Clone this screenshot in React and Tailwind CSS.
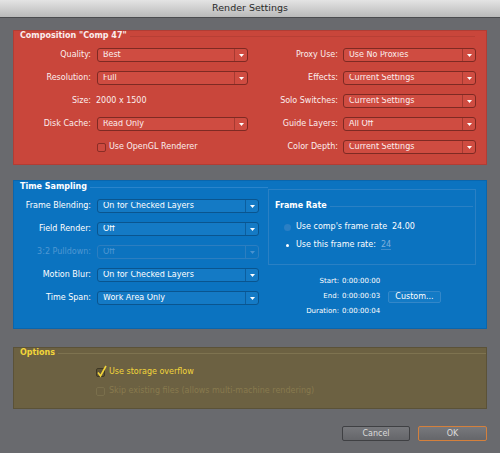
import React from 'react';

const SELECT_TONES = {
  red: 'border-[#7e2a23] bg-[#cf4c41] text-[#fbeeee]',
  blue: 'border-[#0a558f] bg-[#147ac5] text-white',
  off: 'border-[#2c7ec0] bg-[#0c73bf] text-[#4f97d2]',
};
const SEP_TONES = {
  red: 'border-[#a63a31]',
  blue: 'border-[#0c5e9e]',
  off: 'border-[#2c7ec0]',
};

function Select({ value, className = '', tone = 'red' }) {
  return (
    <div className={`flex h-[14px] items-center rounded-[3px] border ${SELECT_TONES[tone]} ${className}`}>
      <span className="flex-1 truncate pl-[5px] leading-none">{value}</span>
      <span className={`flex h-full w-[13px] items-center justify-center border-l ${SEP_TONES[tone]}`}>
        <svg width="5" height="3" viewBox="0 0 5 3">
          <path d="M0 0h5L2.5 3z" fill={tone === 'off' ? '#4a92cf' : '#ffffff'} />
        </svg>
      </span>
    </div>
  );
}

function GroupTitle({ children, color, line, className = '' }) {
  return (
    <div className={`flex h-[10px] items-center pl-[6px] ${className}`}>
      <span className={`font-bold leading-none ${color}`}>{children}</span>
      <span className={`ml-[3px] h-px flex-1 ${line}`} />
    </div>
  );
}

function RedRow({ left, right }) {
  return (
    <div className="flex h-[14px] items-center">
      {left}
      <div className="w-[90px] text-right leading-none">{right.label}</div>
      <Select className="ml-[5px] w-[133px]" value={right.value} />
    </div>
  );
}

function BlueRow({ label, value, tone = 'blue' }) {
  return (
    <div className="flex h-[14px] items-center">
      <div className={`w-[77px] text-right leading-none ${tone === 'off' ? 'text-[#4f97d2]' : ''}`}>{label}</div>
      <Select className="ml-[6px] w-[162px]" value={value} tone={tone} />
    </div>
  );
}

export default function App() {
  const leftLabel = (t) => <div className="w-[77px] text-right leading-none">{t}</div>;

  return (
    <div className="min-h-[453px] w-[500px] bg-[#696a6e] font-['DejaVu_Sans',sans-serif] text-[8px] text-white">
      {/* Title bar */}
      <div className="flex h-[18px] items-center justify-center border-b border-[#4a4b4e] bg-gradient-to-b from-[#e4e4e4] to-[#b9b9b9] text-[9.5px] text-[#2a2a2a]">
        Render Settings
      </div>

      <div className="px-[13px]">
        {/* Composition */}
        <div className="mt-[12px] border border-[#b13d34] bg-[#c9463b] pb-[10px] text-[#fbeeee]">
          <GroupTitle color="text-[#fbeeee]" line="bg-[#b83f35] mr-[11px]">Composition "Comp 47"</GroupTitle>
          <div className="mt-[7px] flex flex-col gap-[9px]">
            <RedRow
              left={<>{leftLabel('Quality:')}<Select className="ml-[6px] w-[151px]" value="Best" /></>}
              right={{ label: 'Proxy Use:', value: 'Use No Proxies' }}
            />
            <RedRow
              left={<>{leftLabel('Resolution:')}<Select className="ml-[6px] w-[151px]" value="Full" /></>}
              right={{ label: 'Effects:', value: 'Current Settings' }}
            />
            <RedRow
              left={<>{leftLabel('Size:')}<div className="ml-[5px] w-[152px] leading-none">2000 x 1500</div></>}
              right={{ label: 'Solo Switches:', value: 'Current Settings' }}
            />
            <RedRow
              left={<>{leftLabel('Disk Cache:')}<Select className="ml-[6px] w-[151px]" value="Read Only" /></>}
              right={{ label: 'Guide Layers:', value: 'All Off' }}
            />
            <RedRow
              left={
                <>
                  <div className="w-[77px]" />
                  <div className="ml-[6px] flex w-[151px] items-center">
                    <span className="h-[9px] w-[9px] rounded-[2px] border border-[#8a2d26] bg-[#cd4a40]" />
                    <span className="ml-[3px] leading-none">Use OpenGL Renderer</span>
                  </div>
                </>
              }
              right={{ label: 'Color Depth:', value: 'Current Settings' }}
            />
          </div>
        </div>

        {/* Time Sampling */}
        <div className="mt-[15px] flex items-start border border-[#0a66ad] bg-[#0b73c0] pb-[9px] pt-[1px]">
          <div className="w-[254px]">
            <GroupTitle color="text-white" line="bg-[#2a84cb]">Time Sampling</GroupTitle>
            <div className="mt-[7px] flex flex-col gap-[9px]">
              <BlueRow label="Frame Blending:" value="On for Checked Layers" />
              <BlueRow label="Field Render:" value="Off" />
              <BlueRow label="3:2 Pulldown:" value="Off" tone="off" />
              <BlueRow label="Motion Blur:" value="On for Checked Layers" />
              <BlueRow label="Time Span:" value="Work Area Only" />
            </div>
          </div>

          <div className="w-[208px] pt-[7px]">
            <div className="h-[76px] border border-[#2a80c4] pt-[11px]">
              <div className="flex h-[10px] items-center pl-[6px]">
                <span className="font-bold leading-none">Frame Rate</span>
                <span className="ml-[3px] mr-[2px] h-px flex-1 bg-[#2a80c4]" />
              </div>
              <div className="mt-[10px] flex h-[12px] items-center pl-[15px]">
                <span className="h-[7px] w-[7px] rounded-full bg-[#2b7fc4]" />
                <span className="ml-[5px] w-[96px] leading-none">Use comp's frame rate</span>
                <span className="leading-none">24.00</span>
              </div>
              <div className="mt-[6px] flex h-[12px] items-center pl-[15px]">
                <span className="flex h-[7px] w-[7px] items-center justify-center rounded-full">
                  <span className="h-[3px] w-[3px] rounded-full bg-white" />
                </span>
                <span className="ml-[5px] w-[85px] leading-none">Use this frame rate:</span>
                <span className="border-b border-[#3f8dcc] leading-none text-[#7fb0dc]">24</span>
              </div>
            </div>

            <div className="mt-[9px] text-[7px]">
              <div className="flex h-[15px] items-center">
                <span className="w-[71px] text-right leading-none">Start:</span>
                <span className="ml-[3px] leading-none">0:00:00:00</span>
              </div>
              <div className="flex h-[15px] items-center">
                <span className="w-[71px] text-right leading-none">End:</span>
                <span className="ml-[3px] w-[46px] leading-none">0:00:00:03</span>
                <span className="flex h-[12px] w-[53px] items-center justify-center rounded-[2px] border border-[#3387c9] bg-[#137ac5] text-[8px] leading-none">
                  Custom...
                </span>
              </div>
              <div className="flex h-[15px] items-center">
                <span className="w-[71px] text-right leading-none">Duration:</span>
                <span className="ml-[3px] leading-none">0:00:00:04</span>
              </div>
            </div>
          </div>
        </div>

        {/* Options */}
        <div className="mt-[18px] border border-[#5b5238] bg-[#6c6142] pb-[11px]">
          <GroupTitle color="text-[#f2d53a]" line="bg-[#7e7350]">Options</GroupTitle>
          <div className="mt-[8px] flex h-[12px] items-center pl-[82px]">
            <span className="relative h-[9px] w-[9px] rounded-[2px] border border-[#3e3825] bg-[#5e5437]">
              <svg className="absolute -left-[1px] -top-[4px]" width="12" height="13" viewBox="0 0 12 13">
                <path d="M2 7.5 L4.5 11 L10 1" stroke="#f2d53a" strokeWidth="1.6" fill="none" />
              </svg>
            </span>
            <span className="ml-[4px] leading-none text-[#f2d53a]">Use storage overflow</span>
          </div>
          <div className="mt-[7px] flex h-[12px] items-center pl-[82px]">
            <span className="h-[9px] w-[9px] rounded-[2px] border border-[#7a6f4c] bg-[#6c6142]" />
            <span className="ml-[4px] leading-none text-[#887a4e]">Skip existing files (allows multi-machine rendering)</span>
          </div>
        </div>

        {/* Buttons */}
        <div className="mt-[17px] flex justify-end gap-[8px]">
          <button className="flex h-[15px] w-[68px] items-center justify-center rounded-[2px] border border-[#3f4043] bg-gradient-to-b from-[#77787c] to-[#65666a] text-[8px] leading-none text-[#dcdcdc]">
            Cancel
          </button>
          <button className="flex h-[15px] w-[69px] items-center justify-center rounded-[2px] border border-[#d4803c] bg-gradient-to-b from-[#77787c] to-[#65666a] text-[8px] leading-none text-[#dcdcdc]">
            OK
          </button>
        </div>
      </div>
    </div>
  );
}
